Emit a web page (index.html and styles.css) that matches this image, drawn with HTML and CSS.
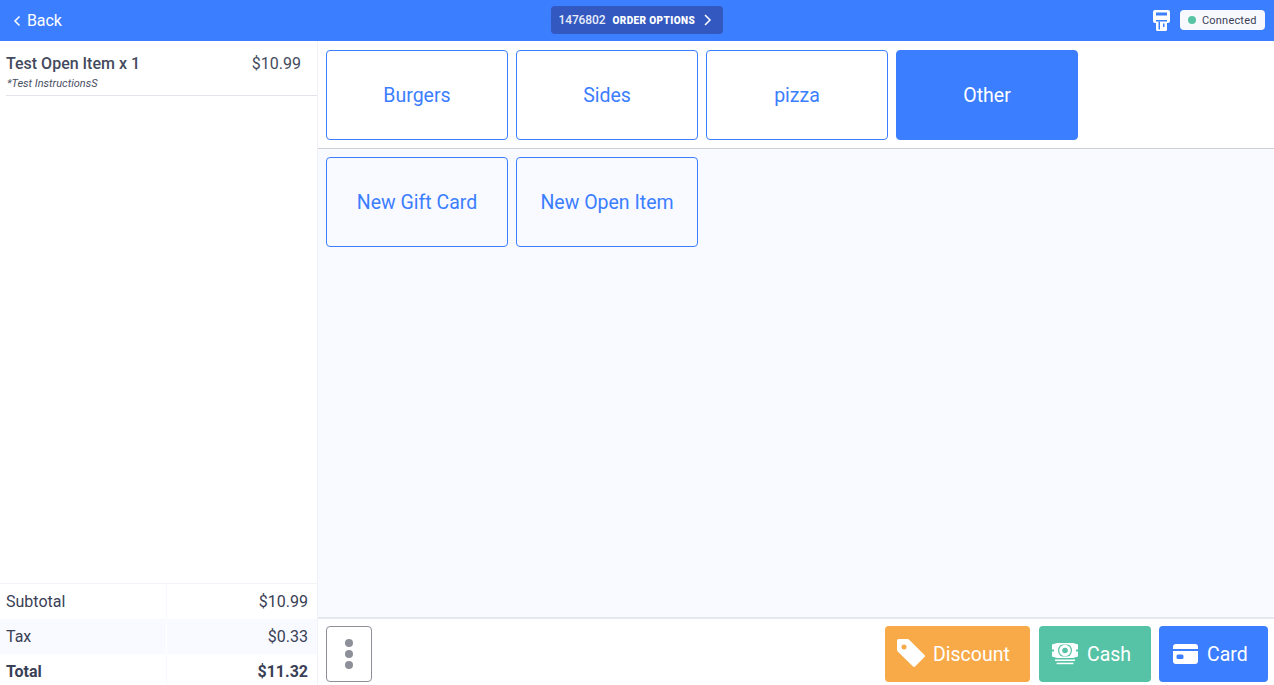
FILE: index.html
```html
<!DOCTYPE html>
<html lang="en">
<head>
<meta charset="utf-8">
<title>Order</title>
<link rel="stylesheet" href="styles.css">
</head>
<body>
<header class="topbar">
  <div class="back">
    <svg class="back-icon" viewBox="0 0 8 12" width="8" height="12"><path d="M6.500 1.500 2 6l4.500 4.500" fill="none" stroke="#fff" stroke-width="1.500"/></svg>
    <span>Back</span>
  </div>
  <div class="order-btn">
    <span class="order-num">1476802</span>
    <span class="order-label">ORDER OPTIONS</span>
    <svg class="order-chev" viewBox="0 0 10 14" width="10" height="14"><path d="M2 2 7 7 2 12" fill="none" stroke="#fff" stroke-width="1.500"/></svg>
  </div>
  <div class="status">
    <svg class="reader" viewBox="0 0 17 21" width="17" height="21">
      <path fill="#fff" d="M2 0h13a2 2 0 0 1 2 2v9a2 2 0 0 1-2 2h-1v6.500a1.500 1.500 0 0 1-1.500 1.500h-8A1.500 1.500 0 0 1 3 19.500V13H2a2 2 0 0 1-2-2V2a2 2 0 0 1 2-2z"/>
      <rect x="3" y="2.500" width="11" height="3" fill="#3b7eff"/>
      <rect x="3" y="10" width="11" height="1.500" fill="#3b7eff"/>
      <rect x="5.500" y="11.500" width="1.500" height="8" fill="#3b7eff"/>
      <rect x="10" y="13.500" width="1.500" height="3.500" fill="#3b7eff"/>
    </svg>
    <div class="pill"><i class="dot"></i><span>Connected</span></div>
  </div>
</header>
<main class="body">
  <aside class="ticket">
    <div class="lines">
      <div class="line">
        <div class="line-top"><span>Test Open Item x 1</span><span>$10.99</span></div>
        <div class="line-note">*Test InstructionsS</div>
      </div>
    </div>
    <div class="totals">
      <div class="row"><span class="cell">Subtotal</span><span class="cell amt">$10.99</span></div>
      <div class="row alt"><span class="cell">Tax</span><span class="cell amt">$0.33</span></div>
      <div class="row strong"><span class="cell">Total</span><span class="cell amt">$11.32</span></div>
    </div>
  </aside>
  <section class="menu">
    <div class="cats">
      <button class="tile">Burgers</button>
      <button class="tile">Sides</button>
      <button class="tile">pizza</button>
      <button class="tile active">Other</button>
    </div>
    <div class="items">
      <button class="tile">New Gift Card</button>
      <button class="tile">New Open Item</button>
    </div>
    <div class="actions">
      <button class="more"><i></i><i></i><i></i></button>
      <div class="pay">
        <button class="act discount">
          <svg viewBox="0 0 28 28" width="28" height="28"><path fill="#fff" fill-rule="evenodd" d="M1.500 0h9.300a1.500 1.500 0 0 1 1.100.5L27.500 16a1.500 1.500 0 0 1 0 2.100l-9.400 9.400a1.500 1.500 0 0 1-2.100 0L.5 12.200A1.500 1.500 0 0 1 0 11.100V1.500A1.500 1.500 0 0 1 1.500 0zM7 5.500a2.500 2.500 0 1 0 0 5 2.500 2.500 0 0 0 0-5z"/></svg>
          <span>Discount</span>
        </button>
        <button class="act cash">
          <svg viewBox="0 0 26 22" width="26" height="22">
            <path fill="#fff" d="M0 1.500 5 0h16l5 1.500v12L21 15H5L0 13.500z"/>
            <rect x="0" y="6.500" width="2" height="2" fill="#57c3a6"/>
            <rect x="24" y="6.500" width="2" height="2" fill="#57c3a6"/>
            <circle cx="13" cy="7.500" r="7" fill="#57c3a6"/>
            <rect x="9" y="0" width="8" height="1.500" fill="#fff"/>
            <rect x="9" y="13.500" width="8" height="1.500" fill="#fff"/>
            <circle cx="13" cy="7.500" r="5.800" fill="#fff"/>
            <circle cx="13" cy="7.500" r="2.800" fill="#57c3a6"/>
            <rect x="3" y="16.500" width="20" height="1.500" fill="#fff"/>
            <rect x="4.600" y="19.700" width="16.800" height="1.500" fill="#fff"/>
          </svg>
          <span>Cash</span>
        </button>
        <button class="act card">
          <svg viewBox="0 0 25 20" width="25" height="20"><path fill="#fff" fill-rule="evenodd" d="M3 0h19a3 3 0 0 1 3 3v2H0V3a3 3 0 0 1 3-3zM0 7h25v10a3 3 0 0 1-3 3H3a3 3 0 0 1-3-3zm5 3.500a1.500 1.500 0 0 0-1.500 1.500v1.500A1.500 1.500 0 0 0 5 15h4a1.500 1.500 0 0 0 1.500-1.500V12A1.500 1.500 0 0 0 9 10.500z"/></svg>
          <span>Card</span>
        </button>
      </div>
    </div>
  </section>
</main>
</body>
</html>
```
FILE: styles.css
```css
* { box-sizing: border-box; }
html, body { margin: 0; padding: 0; height: 685px; overflow: hidden; }
body { font-family: Roboto, "Liberation Sans", sans-serif; color: #3a4055; background: #fff; display: flex; flex-direction: column; }
button { font-family: inherit; cursor: pointer; padding: 0; }

.topbar { height: 41px; flex: none; background: #3b7eff; color: #fff; display: grid; grid-template-columns: 1fr auto 1fr; align-items: center; padding: 0 9px 1px 13px; }
.back { display: flex; align-items: center; gap: 6px; font-size: 16px; letter-spacing: -.1px; }
.back-icon { margin-top: 1px; }
.order-btn { height: 28px; width: 172px; background: #3359c0; border-radius: 4px; display: flex; align-items: center; padding: 0 8px; margin-right: 5px; }
.order-num { font-size: 12px; font-weight: 500; letter-spacing: -.12px; color: #e8edfb; }
.order-label { font-size: 10px; font-weight: 900; letter-spacing: .4px; margin-left: 7px; }
.order-chev { margin-left: 8px; }
.status { display: flex; justify-content: flex-end; align-items: center; gap: 10px; }
.reader { margin-top: 1px; }
.pill { width: 85px; height: 20px; background: #f8f9ff; border-radius: 4px; display: flex; align-items: center; gap: 6px; padding-left: 8px; color: #3a4055; font-size: 11px; letter-spacing: .2px; }
.dot { width: 8px; height: 8px; border-radius: 50%; background: #56c3a5; }

.body { flex: 1; display: flex; min-height: 0; }
.ticket { width: 318px; flex: none; border-right: 1px solid #f1f2f9; display: flex; flex-direction: column; }
.lines { flex: 1; padding: 0 0 0 6px; }
.line { height: 55px; padding-top: 13px; border-bottom: 1px solid #e3e4ec; }
.line-top { display: flex; justify-content: space-between; padding-right: 16px; font-size: 16px; font-weight: 500; line-height: 20px; color: #444a5e; }
.line-top span:last-child { font-weight: 400; }
.line-note { font-size: 11px; font-style: italic; line-height: 13px; margin-top: 3px; padding-left: 1px; color: #4a5064; }
.totals { flex: none; border-top: 1px solid #f3f4fa; margin-bottom: -4px; }
.row { display: grid; grid-template-columns: 166px 1fr; height: 35px; font-size: 16px; align-items: stretch; }
.row.alt { background: #f9faff; }
.cell { padding: 0 9px 0 6px; display: flex; align-items: center; }
.cell.amt { justify-content: flex-end; border-left: 1px solid #f9faff; }
.row.alt .cell.amt { border-left-color: #fff; }
.row.strong { font-weight: 700; }

.menu { flex: 1; min-width: 0; display: flex; flex-direction: column; background: #f9faff; }
.cats { height: 108px; flex: none; background: #fff; border-bottom: 1px solid #cfcfd4; padding: 9px 8px 0; display: flex; gap: 8px; align-items: flex-start; }
.items { flex: 1; padding: 8px; display: flex; gap: 8px; align-items: flex-start; }
.tile { width: 182px; height: 90px; background: transparent; border: 1px solid #3b7eff; border-radius: 4px; color: #3b7eff; font-size: 19.500px; }
.tile.active { background: #3b7eff; color: #fff; }
.actions { height: 68px; flex: none; background: #fff; border-top: 2px solid #e8e9f0; padding: 7px 6px 3px 8px; display: flex; justify-content: space-between; }
.more { width: 46px; height: 56px; background: #fff; border: 1px solid #8e9099; border-radius: 4px; display: flex; flex-direction: column; align-items: center; justify-content: center; gap: 3px; }
.more i { width: 8px; height: 8px; border-radius: 50%; background: #8e9099; }
.pay { display: flex; }
.act { height: 56px; border: 0; border-radius: 4px; color: #fff; font-size: 19.500px; display: flex; align-items: center; justify-content: flex-start; }
.discount { width: 145px; background: #f8aa48; gap: 8px; padding-left: 12px; margin-right: 9px; }
.discount svg { margin-bottom: 3px; }
.cash { width: 112px; background: #57c3a6; gap: 9px; padding-left: 13px; margin-right: 8px; }
.card { width: 109px; background: #3b7eff; gap: 9px; padding-left: 14px; }
```
